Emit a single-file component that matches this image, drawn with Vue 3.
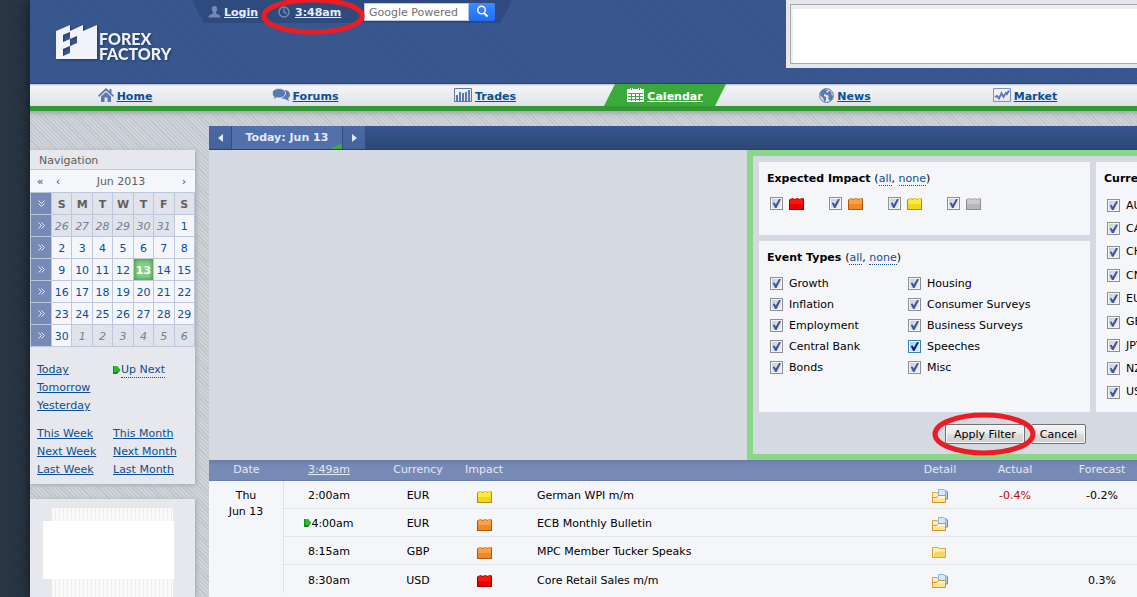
<script setup>
import { reactive } from 'vue'

const nav = [
  { id: 'home', name: 'Home', w: 16, h: 14 },
  { id: 'forums', name: 'Forums', w: 18, h: 14 },
  { id: 'trades', name: 'Trades', w: 18, h: 14 },
  { id: 'calendar', name: 'Calendar', w: 17, h: 14, active: true },
  { id: 'news', name: 'News', w: 15, h: 15 },
  { id: 'market', name: 'Market', w: 18, h: 14 },
]
const days = ['S', 'M', 'T', 'W', 'T', 'F', 'S']
const weeks = [
  [26, 27, 28, 29, 30, 31, 1],
  [2, 3, 4, 5, 6, 7, 8],
  [9, 10, 11, 12, 13, 14, 15],
  [16, 17, 18, 19, 20, 21, 22],
  [23, 24, 25, 26, 27, 28, 29],
  [30, 1, 2, 3, 4, 5, 6],
]
const isOut = (w, d) => (w === 0 && d > 20) || (w === 5 && d < 10)

const tones = {
  red: ['#ff1408', '#ee0000', '#980000'],
  orange: ['#fda044', '#ec8a26', '#a85a0c'],
  yellow: ['#ffe83a', '#f0d620', '#a8930c'],
  gray: ['#cbcbce', '#b6b6ba', '#8c8c90'],
}
const impacts = reactive([
  { tone: 'red', label: 'High impact', on: true },
  { tone: 'orange', label: 'Medium impact', on: true },
  { tone: 'yellow', label: 'Low impact', on: true },
  { tone: 'gray', label: 'Non-economic', on: true },
])
const types = reactive(
  ['Growth', 'Inflation', 'Employment', 'Central Bank', 'Bonds', 'Housing', 'Consumer Surveys', 'Business Surveys', 'Speeches', 'Misc']
    .map((name) => ({ name, on: true, hot: name === 'Speeches' }))
)
const currencies = reactive(
  ['AUD', 'CAD', 'CHF', 'CNY', 'EUR', 'GBP', 'JPY', 'NZD', 'USD'].map((name) => ({ name, on: true }))
)
const events = [
  { time: '2:00am', cur: 'EUR', tone: 'yellow', name: 'German WPI m/m', docs: true, actual: '-0.4%', forecast: '-0.2%' },
  { time: '4:00am', cur: 'EUR', tone: 'orange', name: 'ECB Monthly Bulletin', docs: true, next: true },
  { time: '8:15am', cur: 'GBP', tone: 'orange', name: 'MPC Member Tucker Speaks', docs: false },
  { time: '8:30am', cur: 'USD', tone: 'red', name: 'Core Retail Sales m/m', docs: true, forecast: '0.3%' },
]
</script>

<template>
  <div class="page">
    <header class="header">
      <a class="logo" href="#" aria-label="Forex Factory">
        <svg width="41" height="34" viewBox="0 0 41 34">
          <path fill="#f2f4f9" fill-rule="evenodd" d="M0 6 14 0V6L27 0V6L41 0V34H0ZM7 10V17L14 14V21L7 24V31L14 28V21L21 18V11L14 14V7Z" />
        </svg>
        <span class="logo-text">FOREX<br />FACTORY</span>
      </a>
      <div class="topbar">
        <svg width="13" height="12" viewBox="0 0 13 12"><path fill="#7488b1" d="M6.500 0C9 0 9.600 2 9 4.200 8.700 5.400 8 6 8 7c0 1.300 4.500 1 4.500 4.500H.5C.5 8 5 8.300 5 7 5 6 4.300 5.400 4 4.200 3.400 2 4 0 6.500 0Z" /></svg>
        <a href="#" class="login">Login</a>
        <span class="clock">
          <svg width="12" height="12" viewBox="0 0 12 12" fill="none" stroke="#7488b1" stroke-width="1.500"><circle cx="6" cy="6" r="5" /><path d="M6 2.500V6L8.500 7.500" /></svg>
          <a href="#">3:48am</a>
          <svg class="mark" width="104" height="38" viewBox="0 0 104 38"><ellipse cx="52" cy="19" rx="49" ry="16" fill="none" stroke="#ed1c24" stroke-width="5" /></svg>
        </span>
        <form class="search" @submit.prevent>
          <input type="text" placeholder="Google Powered" aria-label="Search" />
          <button type="submit" aria-label="Search">
            <svg width="13" height="13" viewBox="0 0 13 13" fill="none" stroke="#fff"><circle cx="5.500" cy="5" r="3.800" stroke-width="1.400" /><path d="M8 8l3.500 3.500" stroke-width="2" /></svg>
          </button>
        </form>
      </div>
      <div class="banner"><div></div></div>
    </header>

    <nav class="nav">
      <a v-for="n in nav" :key="n.id" href="#" :class="{ active: n.active }">
        <svg :width="n.w" :height="n.h" :viewBox="`0 0 ${n.w} ${n.h}`">
          <path v-if="n.id === 'home'" fill="#5b78b0" d="M8 0 0 7.500 1 9 8 2.500 15 9 16 7.500 13.500 5.200V1H11.500V3.200ZM8 4 3 8.500V14H6.500V9.500H9.500V14H13V8.500Z" />
          <g v-else-if="n.id === 'forums'">
            <path fill="#5b78b0" d="M12 2c3.500 0 6 2 6 4.800 0 1.500-.7 2.700-1.800 3.500L17 13l-3.500-1.800c-2 0-3.500-.4-4.500-1.200Z" />
            <path fill="#5b78b0" stroke="#e9ebf0" d="M6.800.5c3.800 0 6.700 2 6.700 4.700S10.600 10 6.800 10L4 9.900 1.500 12 2 8.800C1 7.900.3 6.800.3 5.200.3 2.500 3 .5 6.800.5Z" />
          </g>
          <g v-else-if="n.id === 'trades'" fill="#5b78b0">
            <path fill="none" stroke="#5b78b0" d="M.5.500h17v13H.5Z" />
            <path d="M2 7h2v6H2ZM5 4h2v9H5ZM8 5h2v8H8ZM11 4h2v9h-2ZM14 2h2v11h-2Z" />
          </g>
          <g v-else-if="n.id === 'calendar'">
            <path fill="#fff" d="M0 1h3V0h3v1h5V0h3v1h3v13H0Z" />
            <path stroke="#3aab3a" fill="none" d="M1 5.500h15M1 8.500h15M1 11.500h15M4.500 5v8M8.500 5v8M12.500 5v8M4.500 0v2M12.500 0v2" />
          </g>
          <g v-else-if="n.id === 'news'">
            <circle cx="7.500" cy="7.500" r="6.900" fill="#dfe4ee" stroke="#5b78b0" />
            <path fill="#5b78b0" d="M2 3 6 1 9 2 7 4 9 5 8 7 5 6 5 8 7 9 7 12 5.500 14 4 10 1 7ZM10 2l3 3-1 1 2 2-1 4-2 1-2-3 1-2-2-1 1-3 1-1Z" />
          </g>
          <g v-else fill="none" stroke="#5b78b0">
            <path stroke="#7b93c0" d="M.5.500h17v13H.5Z" />
            <path stroke-width="1.800" d="M2 9 4 8 6 10.500 8.500 5 10.500 9 13 5 14 6 16 2.500" />
          </g>
        </svg>
        <span>{{ n.name }}</span>
      </a>
    </nav>

    <div class="body">
      <aside class="side">
        <section class="block">
          <h2>Navigation</h2>
          <div class="month">
            <button aria-label="Previous year">«</button>
            <button aria-label="Previous month">‹</button>
            <span>Jun 2013</span>
            <button aria-label="Next month">›</button>
          </div>
          <table class="cal">
            <thead>
              <tr><th class="wk"><svg width="7" height="7" viewBox="0 0 7 7"><path d="M.5.500l3 3 3-3M.5 3.500l3 3 3-3" /></svg></th><th v-for="(d, i) in days" :key="i">{{ d }}</th></tr>
            </thead>
            <tbody>
              <tr v-for="(w, wi) in weeks" :key="wi">
                <td class="wk"><svg width="7" height="7" viewBox="0 0 7 7"><path d="M.5.500l3 3-3 3M3.500.500l3 3-3 3" /></svg></td>
                <td v-for="d in w" :key="d" :class="{ out: isOut(wi, d), now: d === 13 }">{{ d }}</td>
              </tr>
            </tbody>
          </table>
          <div class="links">
            <div><a href="#">Today</a><a href="#">Tomorrow</a><a href="#">Yesterday</a></div>
            <div><span class="upnext"><svg width="8" height="8" viewBox="0 0 8 8"><path fill="#16861a" d="M0 0h4l3.500 4L4 8H0Z" /><path fill="#28bd2c" d="M1 0h3l3 3.500L4 6H1Z" /></svg><a href="#" class="dot">Up Next</a></span></div>
            <div><a href="#">This Week</a><a href="#">Next Week</a><a href="#">Last Week</a></div>
            <div><a href="#">This Month</a><a href="#">Next Month</a><a href="#">Last Month</a></div>
          </div>
        </section>
        <section class="block promo"><div class="stripes"><div class="blank"></div></div></section>
      </aside>

      <main class="main">
        <div class="bar">
          <button class="step" aria-label="Previous day"><svg width="5" height="8" viewBox="0 0 5 8"><path fill="#e2eaf8" d="M5 0v8L0 4Z" /></svg></button>
          <button class="today">Today: Jun 13</button>
          <button class="step" aria-label="Next day"><svg width="5" height="8" viewBox="0 0 5 8"><path fill="#e2eaf8" d="M0 0v8L5 4Z" /></svg></button>
        </div>

        <div class="filter-area">
          <form class="filter" @submit.prevent>
            <div class="panels">
              <div class="col">
                <section class="panel impact">
                  <h3>Expected Impact <span>(<a href="#">all</a>, <a href="#">none</a>)</span></h3>
                  <div class="impacts">
                    <label v-for="i in impacts" :key="i.tone">
                      <input type="checkbox" v-model="i.on" :aria-label="i.label" />
                      <svg width="15" height="13" viewBox="0 0 15 13">
                        <path :fill="tones[i.tone][2]" d="M0 3 1 2 4 1 5 2 9 1 10 2 14 1 15 2V13H0Z" />
                        <path :fill="tones[i.tone][0]" d="M1 3 4 1 5 3 9 1 10 3 13 1 14 2V8H1Z" />
                        <path :fill="tones[i.tone][1]" d="M1 7H14V12H1Z" />
                      </svg>
                    </label>
                  </div>
                </section>
                <section class="panel events">
                  <h3>Event Types <span>(<a href="#">all</a>, <a href="#">none</a>)</span></h3>
                  <div class="types">
                    <label v-for="t in types" :key="t.name"><input type="checkbox" v-model="t.on" :class="{ hot: t.hot }" />{{ t.name }}</label>
                  </div>
                </section>
              </div>
              <section class="panel curr">
                <h3>Currencies</h3>
                <div class="currs">
                  <label v-for="c in currencies" :key="c.name"><input type="checkbox" v-model="c.on" />{{ c.name }}</label>
                </div>
              </section>
            </div>
            <div class="actions">
              <span class="apply">
                <button type="submit">Apply Filter</button>
                <svg class="mark" width="104" height="44" viewBox="0 0 104 44"><ellipse cx="52" cy="22" rx="49" ry="19" fill="none" stroke="#ed1c24" stroke-width="5" /></svg>
              </span>
              <button type="button">Cancel</button>
            </div>
          </form>
        </div>

        <table class="list">
          <colgroup><col class="c-date" /><col class="c-time" /><col class="c-cur" /><col class="c-imp" /><col /><col class="c-det" /><col class="c-act" /><col class="c-for" /></colgroup>
          <thead>
            <tr><th>Date</th><th><a href="#">3:49am</a></th><th>Currency</th><th>Impact</th><th></th><th>Detail</th><th>Actual</th><th class="fc">Forecast</th></tr>
          </thead>
          <tbody>
            <tr v-for="(e, i) in events" :key="i">
              <td v-if="i === 0" class="date" rowspan="4">Thu<br />Jun 13</td>
              <td><svg v-if="e.next" class="flag" width="7" height="8" viewBox="0 0 7 8"><path fill="#16861a" d="M0 0h4l3 4-3 4H0Z" /><path fill="#28bd2c" d="M1 0h3l3 3.500L4 6H1Z" /></svg>{{ e.time }}</td>
              <td>{{ e.cur }}</td>
              <td>
                <svg width="15" height="13" viewBox="0 0 15 13">
                  <path :fill="tones[e.tone][2]" d="M0 3 1 2 4 1 5 2 9 1 10 2 14 1 15 2V13H0Z" />
                  <path :fill="tones[e.tone][0]" d="M1 3 4 1 5 3 9 1 10 3 13 1 14 2V8H1Z" />
                  <path :fill="tones[e.tone][1]" d="M1 7H14V12H1Z" />
                </svg>
              </td>
              <td class="name">{{ e.name }}</td>
              <td>
                <svg width="16" height="14" viewBox="0 0 16 14">
                  <g v-if="e.docs">
                    <path fill="#fdf0c0" stroke="#dba23a" d="M.5 13.500V3.500H5L6 5h7.500v8.500Z" />
                    <path fill="#b4d0f2" stroke="#5f8cc8" d="M9.500 1.500H14L15.500 3v7H13Z" />
                    <path fill="#d7e8fb" stroke="#8fb4e2" d="M6.500.500H12L13.500 2v5h-7Z" />
                    <path fill="#fde592" stroke="#d59434" d="M.5 13.500V8.500H5L6.500 6.500h7v7Z" />
                    <path fill="#fff6d4" d="M1 9H5L7 7H13V9L1 10Z" />
                  </g>
                  <g v-else>
                    <path fill="#fcf0bd" stroke="#dba23a" d="M.5 12.500V2.500H6L7.500 3.500H13.500v9Z" />
                    <path fill="#f8d65c" d="M2 8 7 6.500H13V12H2Z" />
                  </g>
                </svg>
              </td>
              <td class="neg">{{ e.actual }}</td>
              <td class="fc">{{ e.forecast }}</td>
            </tr>
          </tbody>
        </table>
      </main>
    </div>
  </div>
</template>

<style>
html {
  background: repeating-linear-gradient(45deg, #26323f 0 1px, #2a3745 1px 3px);
}
</style>

<style scoped>
* { box-sizing: border-box; }
.page {
  margin-left: 30px;
  min-height: 100vh;
  display: flex;
  flex-direction: column;
  overflow: hidden;
  font: 11px/16px Verdana, "DejaVu Sans", sans-serif;
  color: #000;
  background: repeating-linear-gradient(45deg, #cdd3d6 0 2px, #bec5c9 2px 3px);
  box-shadow: 0 0 14px #101820;
}
svg { display: block; flex: none; }
a { color: #0b4f94; }
button { font: inherit; padding: 0; border: 0; background: none; color: inherit; }
h2, h3 { margin: 0; font-size: 11px; line-height: 16px; }

.header {
  display: flex;
  height: 84px;
  background: repeating-linear-gradient(45deg, #38588f 0 2px, #36548b 2px 3px);
  border-bottom: 1px solid #29406f;
}
.logo { display: flex; gap: 2px; padding: 25px 0 0 26px; width: 162px; text-decoration: none; color: #eef1f8; filter: drop-shadow(1px 1px 1px #24395f); }
.logo-text { font: 900 16px/15px Lato, sans-serif; padding-top: 6px; }
.topbar {
  display: flex;
  align-items: center;
  height: 23px;
  width: 320px;
  padding-left: 16px;
  color: #fff;
  font-weight: bold;
  background: linear-gradient(62deg, transparent 10px, #2f4b7d 11px) left / 160px 100% no-repeat, linear-gradient(-62deg, transparent 10px, #2f4b7d 11px) right / 160px 100% no-repeat;
}
.topbar a { color: #e8edf8; padding-top: 2px; }
.login { margin-left: 3px; width: 54px; }
.clock { position: relative; display: flex; align-items: center; gap: 5px; width: 86px; }
.mark { position: absolute; pointer-events: none; z-index: 2; }
.clock .mark { left: -17px; top: -6px; }
.search { display: flex; height: 18px; }
.search input { width: 105px; height: 18px; border: 1px solid #b7c6de; padding: 1px 4px 0; font: 11px/16px Verdana, "DejaVu Sans", sans-serif; background: #fff; }
.search input::placeholder { color: #707070; opacity: 1; }
.search button { display: grid; place-items: center; width: 26px; background: linear-gradient(#3e8bff, #1f6df5); border-radius: 0 2px 2px 0; }
.banner { margin-left: auto; width: 351px; height: 68px; padding: 4px 0 4px 4px; background: #e6e7ee; }
.banner div { height: 60px; border: 1px solid #a9a9ab; border-right: 0; background: #fff; box-shadow: inset 2px 4px 0 #eeeeec; }

.nav {
  display: grid;
  grid-template-columns: repeat(6, 1fr);
  justify-items: center;
  height: 27px;
  padding: 0 22px 0 5px;
  background: linear-gradient(#c9ccd6 0 1px, #f4f5f8 2px, #dfe2e8 100%);
  border-bottom: 5px solid #339833;
}
.nav a { display: flex; align-items: center; justify-content: center; gap: 3px; height: 22px; width: 122px; font-weight: bold; }
.nav a span { padding-top: 3px; }
.nav .active { color: #fff; background: #3aab3a; clip-path: polygon(11px 0, 100% 0, 111px 100%, 0 100%); }

.body { flex: 1; display: flex; gap: 14px; padding-top: 15px; box-shadow: inset 0 5px 5px -3px #9aa3a8; }
.side { width: 165px; flex: none; display: flex; flex-direction: column; gap: 15px; padding-top: 24px; }
.block { background: #e6e8ed; box-shadow: 1px 1px 4px #a0a8ad; }
.block h2 { font-weight: normal; color: #5c5c5c; height: 20px; padding: 3px 9px 0; border-bottom: 1px solid #bdc7dd; }
.month { display: flex; height: 22px; align-items: center; background: #f5f6fa; color: #606060; padding: 2px 6px 0 5px; }
.month span { flex: 1; text-align: center; }
.month button { width: 10px; color: #0b4f94; }
.month button + button { margin-left: 8px; }
.cal { width: 100%; border-collapse: collapse; table-layout: fixed; }
.cal th, .cal td { height: 22px; padding: 2px 0 0; border: 1px solid #bcc6dd; text-align: center; background: #f5f6fa; color: #0b4f94; line-height: 16px; }
.cal th, .cal .out { background: repeating-linear-gradient(45deg, #e3e6ec 0 2px, #d8dce6 2px 3px); color: #606060; }
.cal .out { font-style: italic; color: #72809a; }
.cal .wk { width: 21px; padding: 0; background: #778ab5; }
.wk svg { margin: 0 auto; fill: none; stroke: #e6ecf8; }
.cal .now { background: #87cf85; color: #fff; font-weight: bold; box-shadow: inset 0 0 4px 1px #479449; }
.links { display: grid; grid-template-columns: 76px 1fr; row-gap: 10px; padding: 14px 7px 5px; line-height: 18px; white-space: nowrap; }
.links div { display: flex; flex-direction: column; align-items: flex-start; }
.upnext { display: flex; align-items: center; height: 18px; }
.dot, h3 a { text-decoration: none; border-bottom: 1px dotted #0b4f94; line-height: 14px; }
.upnext .dot { padding-top: 1px; }
.promo { flex: 1; padding: 9px 22px 0; }
.stripes { height: 100%; padding-top: 13px; background: repeating-linear-gradient(90deg, #f9f9fa 0 3px, #efeff0 3px 4px); }
.blank { height: 58px; margin: 0 -1px 0 -9px; background: #fff; }

.main { flex: 1; min-width: 0; display: flex; flex-direction: column; background: #f5f6fa; }
.bar { display: flex; height: 24px; background: linear-gradient(#37568e, #2e4775); border-bottom: 1px solid #293f6a; }
.bar button { background: linear-gradient(#4a68a2, #45639b); border-right: 1px solid #304c80; }
.bar .step { display: grid; place-items: center; width: 23px; padding-top: 1px; }
.bar .today { width: 111px; padding-top: 1px; font-weight: bold; color: #e4e9f3; background: linear-gradient(153deg, transparent 50%, #3aab3a 52%) right bottom / 12px 6px no-repeat, #5270ab; }

.filter-area { display: flex; height: 310px; background: #d5d9e2; }
.filter { width: 390px; margin-left: auto; display: flex; flex-direction: column; border: 6px solid #8bd787; border-right: 0; padding: 6px 0 0 6px; }
.panels { display: flex; gap: 6px; height: 250px; }
.col { width: 331px; flex: none; display: flex; flex-direction: column; gap: 6px; }
.panel { background: #f5f6fa; padding: 9px 8px 8px; }
.impact { height: 73px; }
.events { flex: 1; }
.panel h3 span { font-weight: normal; }
.curr { width: 160px; flex: none; display: flex; flex-direction: column; }
.panel label { display: flex; align-items: center; gap: 6px; }
.impacts { display: flex; padding: 10px 3px; }
.impacts label { width: 59px; }
.types { display: grid; grid-template-rows: repeat(5, 21px); grid-template-columns: 138px 1fr; grid-auto-flow: column; padding: 7px 3px; }
.currs { flex: 1; display: flex; flex-direction: column; padding: 7px 3px 0; }
.currs label { flex: 1; }
input[type='checkbox'] { appearance: none; flex: none; width: 13px; height: 13px; margin: 0; border: 1px solid #8e8f8f; background: linear-gradient(135deg, #c5cbd5, #f4f4f6); box-shadow: inset 0 0 0 1px #f4f4f4; }
input[type='checkbox']:checked::after { content: ''; display: block; width: 9px; height: 9px; margin: 1px; background: #3f569c; clip-path: polygon(8% 45%, 28% 40%, 42% 62%, 78% 0, 100% 4%, 50% 100%, 34% 100%); }
input[type='checkbox'].hot { border-color: #3c7fb1; background: linear-gradient(135deg, #8fd3f5, #e6f7fd); }
input[type='checkbox'].hot:checked::after { background: #12227a; }
.actions { display: flex; gap: 6px; padding: 12px 0 0 186px; height: 42px; }
.actions button { height: 20px; line-height: 16px; padding: 1px 8px 0; border: 1px solid #707070; border-radius: 2px; background: linear-gradient(#f3f3f3, #ebebeb 50%, #dddddd 50%, #cfcfcf); box-shadow: inset 0 0 0 1px #f6f6f6; white-space: nowrap; }
.apply { position: relative; }
.apply .mark { left: -13px; top: -12px; }

.list { width: 100%; table-layout: fixed; border-collapse: separate; border-spacing: 0; }
.c-date { width: 75px; }
.c-time { width: 90px; }
.c-cur { width: 88px; }
.c-imp { width: 44px; }
.c-det { width: 70px; }
.c-act { width: 80px; }
.c-for { width: 82px; }
.list th { height: 21px; padding: 0; font-weight: normal; color: #e4e8f2; background: linear-gradient(#6a7ca6, #778ab5 6px); border-bottom: 1px solid #6c7fa9; white-space: nowrap; }
.list th a { color: inherit; }
.list td { height: 28px; padding: 3px 0 0; text-align: center; border-bottom: 1px solid #e2e5ea; }
.list tr:last-child td, .list .date { border-bottom: 0; }
.list .date { vertical-align: top; padding-top: 7px; border-right: 1px solid #dfe2e8; }
.list td svg { margin: 0 auto; }
.list td .flag { display: inline-block; margin: 0; }
.list .name { text-align: left; padding-left: 31px; }
.list .neg { color: #c00; }
.list .fc { padding-left: 12px; }
</style>
